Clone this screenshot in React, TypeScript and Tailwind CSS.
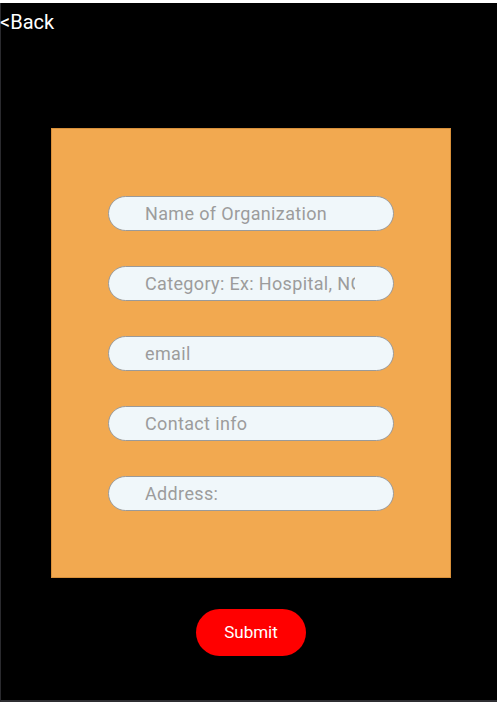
const fields = [
  'Name of Organization',
  'Category: Ex: Hospital, NGO',
  'email',
  'Contact info',
  'Address:',
]

export default function App() {
  return (
    <div className="w-[497px] h-[705px] bg-white pt-[3px] font-['Roboto',sans-serif]">
      <div className="h-[699px] bg-black border-l border-[#2a2a2e] border-b-2 border-b-[#2f2f33] flex flex-col">
        <button className="self-start text-white text-[20px] leading-[24px] mt-[7px] -ml-px">
          &lt;Back
        </button>
        <div className="ml-[50px] mt-[94px] w-[400px] h-[450px] bg-[#f2a950] border border-[#d8903a] flex flex-col items-center justify-center gap-[35px]">
          {fields.map((f) => (
            <input
              key={f}
              placeholder={f}
              className="w-[286px] h-[35px] rounded-full bg-[#f0f7fa] border border-[#9a9a9a] pl-[36px] pr-[38px] text-[18px] tracking-[0.35px] text-gray-700 placeholder:text-[#9c9c9c] outline-none"
            />
          ))}
        </div>
        <button className="self-start ml-[195px] mt-[31px] w-[110px] h-[47px] rounded-full bg-[#ff0000] text-white text-[17px]">
          Submit
        </button>
      </div>
    </div>
  )
}
